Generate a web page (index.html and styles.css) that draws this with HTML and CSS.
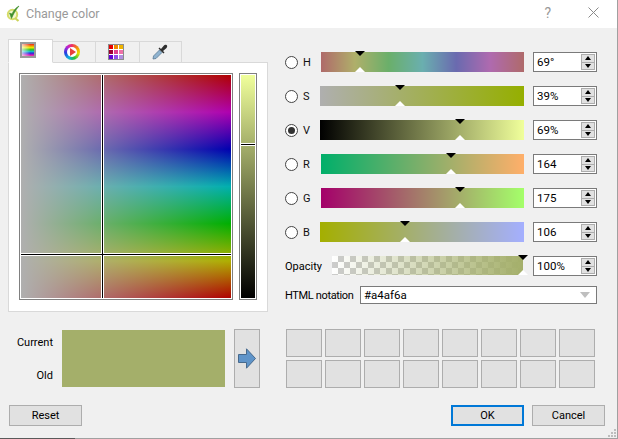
FILE: index.html
```html
<!DOCTYPE html>
<html lang="en">
<head>
<meta charset="utf-8">
<title>Change color</title>
<link rel="stylesheet" href="styles.css">
</head>
<body>
<div class="window">
  <header class="titlebar">
    <svg class="logo" width="14" height="17" viewBox="0 0 14 17">
      <circle cx="6.500" cy="9.500" r="4.700" fill="#f4f6cf" stroke="#d5dc6a" stroke-width="2"/>
      <path d="M9 13 L12.500 16" stroke="#cdd45a" stroke-width="2.200" fill="none"/>
      <path d="M3.500 8 L5.500 13.500 C7.500 9 9.500 5 13 1 C9.500 3 7.500 5.500 6 9 Z" fill="#3f8f2c" stroke="#3f8f2c" stroke-width=".6"/>
    </svg>
    <span class="title">Change color</span>
    <span class="help">?</span>
    <svg class="close" width="11" height="11" viewBox="0 0 11 11"><path d="M.5.5l10 10M10.500.5l-10 10" stroke="#8a8a8a" fill="none"/></svg>
  </header>

  <main class="content">
    <div class="top">
      <section class="picker">
        <div class="tabs">
          <div class="tab tab-active tab-a"><span class="icon-ramp"></span></div>
          <div class="tab tab-b"><span class="icon-wheel"><span class="icon-play"></span></span></div>
          <div class="tab tab-c">
            <span class="icon-grid">
              <i class="c1"></i><i class="c2"></i><i class="c3"></i>
              <i class="c4"></i><i class="c5"></i><i class="c6"></i>
              <i class="c7"></i><i class="c8"></i><i class="c9"></i>
            </span>
          </div>
          <div class="tab tab-d">
            <svg width="16" height="16" viewBox="0 0 16 16">
              <path d="M1 15 L1.500 12 L7.500 6 L10 8.500 L4 14.500 Z" fill="#8fb3d0" stroke="#5a7a94" stroke-width=".8"/>
              <path d="M6.500 4.500 L11.500 9.500 L12.500 8.500 L11 7 L14 4.500 C15.500 3 15.500 1.500 14.500 1 C13.500 .3 12.500 .8 11.500 2 L9 5 L7.500 3.500 Z" fill="#2f2f2f"/>
            </svg>
          </div>
        </div>
        <div class="pane">
          <div class="box">
            <div class="box-field">
              <span class="cross-v"></span>
              <span class="cross-h"></span>
              <span class="cross-dot"></span>
            </div>
          </div>
          <div class="ramp">
            <div class="ramp-field"><span class="ramp-mark"></span></div>
          </div>
        </div>
      </section>

      <section class="controls">
        <div class="row">
          <span class="radio"></span><span class="letter wide">H</span>
          <div class="slider sl-h"><i class="m-top" style="left:39px"></i><i class="m-bot" style="left:39px"></i></div>
          <div class="spin"><span class="spin-val">69°</span><span class="spin-btns"><b class="up"></b><b class="down"></b></span></div>
        </div>
        <div class="row">
          <span class="radio"></span><span class="letter">S</span>
          <div class="slider sl-s"><i class="m-top" style="left:80px"></i><i class="m-bot" style="left:80px"></i></div>
          <div class="spin"><span class="spin-val">39%</span><span class="spin-btns"><b class="up"></b><b class="down"></b></span></div>
        </div>
        <div class="row">
          <span class="radio radio-on"></span><span class="letter">V</span>
          <div class="slider sl-v"><i class="m-top" style="left:140px"></i><i class="m-bot" style="left:140px"></i></div>
          <div class="spin"><span class="spin-val">69%</span><span class="spin-btns"><b class="up"></b><b class="down"></b></span></div>
        </div>
        <div class="row">
          <span class="radio"></span><span class="letter wide">R</span>
          <div class="slider sl-r"><i class="m-top" style="left:130px"></i><i class="m-bot" style="left:130px"></i></div>
          <div class="spin"><span class="spin-val">164</span><span class="spin-btns"><b class="up"></b><b class="down"></b></span></div>
        </div>
        <div class="row">
          <span class="radio"></span><span class="letter wide">G</span>
          <div class="slider sl-g"><i class="m-top" style="left:139px"></i><i class="m-bot" style="left:139px"></i></div>
          <div class="spin"><span class="spin-val">175</span><span class="spin-btns"><b class="up"></b><b class="down"></b></span></div>
        </div>
        <div class="row">
          <span class="radio"></span><span class="letter">B</span>
          <div class="slider sl-b"><i class="m-top" style="left:85px"></i><i class="m-bot" style="left:85px"></i></div>
          <div class="spin"><span class="spin-val">106</span><span class="spin-btns"><b class="up"></b><b class="down"></b></span></div>
        </div>
        <div class="row">
          <span class="opacity-label">Opacity</span>
          <div class="slider sl-o"><i class="m-top" style="left:191px"></i><i class="m-bot" style="left:191px"></i></div>
          <div class="spin spin-o"><span class="spin-val">100%</span><span class="spin-btns"><b class="up"></b><b class="down"></b></span></div>
        </div>
        <div class="row-html">
          <span class="html-label">HTML notation</span>
          <div class="combo"><span>#a4af6a</span><i class="combo-arrow"></i></div>
        </div>
      </section>
    </div>

    <div class="mid">
      <div class="cur-labels"><span>Current</span><span>Old</span></div>
      <div class="preview"></div>
      <button class="arrow-btn" type="button" aria-label="Copy">
        <svg width="18" height="21" viewBox="0 0 18 21"><path d="M.5 6.500 H8.500 V.8 L17.500 10.500 L8.500 20.200 V14.500 H.5 Z" fill="#5f94c9" stroke="#47698c"/></svg>
      </button>
      <div class="swatches">
        <i></i><i></i><i></i><i></i><i></i><i></i><i></i><i></i>
        <i></i><i></i><i></i><i></i><i></i><i></i><i></i><i></i>
      </div>
    </div>

    <footer class="foot">
      <button class="btn btn-reset" type="button">Reset</button>
      <button class="btn btn-ok" type="button">OK</button>
      <button class="btn btn-cancel" type="button">Cancel</button>
    </footer>
  </main>

  <svg class="grip" width="8" height="8" viewBox="0 0 8 8">
    <path d="M6 0h2v2H6zM3 3h2v2H3zM6 3h2v2H6zM0 6h2v2H0zM3 6h2v2H3zM6 6h2v2H6z" fill="#bdbdbd"/>
  </svg>
  <span class="edge-dark"></span>
</div>
</body>
</html>
```

FILE: styles.css
```css
* { box-sizing: border-box; }
html, body { margin: 0; padding: 0; }
body {
  width: 618px;
  height: 439px;
  overflow: hidden;
  font-family: Roboto, "Noto Sans", sans-serif;
  font-size: 11px;
  color: #000;
}
.window {
  position: relative;
  width: 618px;
  height: 439px;
  background: #f0f0f0;
  border-right: 1px solid #a0a0a0;
  border-bottom: 1px solid #a0a0a0;
  display: flex;
  flex-direction: column;
}
.edge-dark {
  position: absolute;
  left: 0;
  bottom: -1px;
  width: 75px;
  height: 1px;
  background: #5a5a5a;
}
.titlebar {
  height: 28px;
  flex: none;
  background: #fff;
  display: flex;
  align-items: center;
  padding-left: 6px;
  color: #999;
}
.logo { flex: none; margin-top: -2px; }
.title { margin-left: 6px; font-size: 12.500px; margin-top: -2px; }
.help { margin-left: auto; font-size: 14px; margin-top: -3px; }
.close { margin: -3px 18px 0 37px; }

.content {
  flex: 1;
  padding: 11px 12px 0 8px;
  display: flex;
  flex-direction: column;
}
.top { display: flex; height: 273px; }

/* picker */
.picker { width: 260px; flex: none; display: flex; flex-direction: column; }
.tabs { display: flex; align-items: flex-end; height: 24px; margin-bottom: -1px; position: relative; z-index: 1; }
.tab {
  height: 22px;
  border: 1px solid #d9d9d9;
  border-left: 0;
  background: #f0f0f0;
  display: flex;
  align-items: center;
  justify-content: center;
  padding-bottom: 1px;
}
.tab-a { width: 45px; height: 24px; border-left: 1px solid #d9d9d9; background: #fff; border-bottom-color: #fff; padding: 0 5px 3px 0; }
.tab-b { width: 43px; padding-right: 5px; }
.tab-c { width: 44px; padding-right: 4px; }
.tab-d { width: 42px; padding-right: 2px; }
.icon-ramp {
  width: 16px;
  height: 16px;
  border: 2px solid #9a9a9a;
  background:
    linear-gradient(to right, rgba(255,255,255,.7), rgba(255,255,255,0) 70%),
    linear-gradient(to bottom, #f02020, #f0a000 18%, #e8e800 30%, #20c020 48%, #10c0c0 62%, #2030e0 76%, #c010c0 90%, #f040a0);
}
.icon-wheel {
  position: relative;
  width: 16px;
  height: 16px;
  border-radius: 50%;
  background: conic-gradient(#f03060, #f0a000 60deg, #e8e000 100deg, #20c040 160deg, #10b0e0 210deg, #2040e0 260deg, #c020d0 320deg, #f03060);
}
.icon-wheel::before {
  content: "";
  position: absolute;
  inset: 3px;
  border-radius: 50%;
  background: #fff;
}
.icon-play {
  position: absolute;
  left: 6px;
  top: 4px;
  border-left: 6px solid #e8403c;
  border-top: 4px solid transparent;
  border-bottom: 4px solid transparent;
}
.icon-grid {
  width: 16px;
  height: 16px;
  border: 1px solid #8c8c8c;
  background: #fff;
  display: grid;
  grid-template-columns: repeat(3, 4px);
  grid-auto-rows: 4px;
  gap: 1px;
}
.c1 { background: #e80000; } .c2 { background: #f08a00; } .c3 { background: #f0b400; }
.c4 { background: #a00030; } .c5 { background: #e0408c; } .c6 { background: #f070a8; }
.c7 { background: #6000d8; } .c8 { background: #9050e8; } .c9 { background: #b090e0; }
.pane {
  height: 250px;
  background: #fff;
  border: 1px solid #d9d9d9;
  padding: 10px 10px 0 10px;
  display: flex;
  gap: 6px;
  align-items: flex-start;
}
.box, .ramp {
  height: 227px;
  border: 1px solid #808080;
  padding: 1px;
  background: #fff;
}
.box { width: 214px; }
.ramp { width: 18px; }
.box-field, .ramp-field { position: relative; width: 100%; height: 100%; }
.box-field {
  background:
    linear-gradient(to right, #afafaf, rgba(175,175,175,0)),
    linear-gradient(to bottom, #af0000, #af00af 16.670%, #0000af 33.330%, #00afaf 50%, #00af00 66.670%, #afaf00 83.330%, #af0000);
}
.cross-v {
  position: absolute;
  left: 80px;
  top: 0;
  bottom: 0;
  width: 3px;
  background: linear-gradient(to right, #fff 33%, #000 33% 66%, #fff 66%);
}
.cross-h {
  position: absolute;
  left: 0;
  right: 0;
  top: 178px;
  height: 3px;
  background: linear-gradient(to bottom, #fff 33%, #000 33% 66%, #fff 66%);
}
.cross-dot {
  position: absolute;
  left: 80px;
  top: 178px;
  width: 3px;
  height: 3px;
  background:
    linear-gradient(#000, #000) center / 1px 100% no-repeat,
    linear-gradient(#000, #000) center / 100% 1px no-repeat,
    #fff;
}
.ramp-field { background: linear-gradient(to bottom, #f0ff9b, #000); }
.ramp-mark {
  position: absolute;
  left: 0;
  right: 0;
  top: 68px;
  height: 3px;
  background: linear-gradient(to bottom, #fff 33%, #000 33% 66%, #fff 66%);
}

/* controls */
.controls { width: 312px; margin-left: 17px; padding-top: 13px; flex: none; }
.row { display: flex; align-items: center; height: 20px; margin-bottom: 14px; }
.radio {
  position: relative;
  width: 13px;
  height: 13px;
  flex: none;
  border-radius: 50%;
  border: 1px solid #444;
  background: #fff;
}
.radio-on::after {
  content: "";
  position: absolute;
  inset: 2px;
  border-radius: 50%;
  background: #333;
}
.letter { width: 17px; margin-left: 5px; flex: none; color: #111; }
.wide { width: 18px; }
.opacity-label { width: 47px; flex: none; }
.slider { position: relative; flex: 1; height: 20px; }
.m-top, .m-bot {
  position: absolute;
  width: 0;
  height: 0;
  margin-left: -5px;
  border-left: 5px solid transparent;
  border-right: 5px solid transparent;
}
.m-top { top: -1px; border-top: 5px solid #000; }
.m-bot { bottom: 0; border-bottom: 5px solid #fff; }
.sl-h { background: linear-gradient(to right, #af6a6a, #afaf6a 16.670%, #6aaf6a 33.330%, #6aafaf 50%, #6a6aaf 66.670%, #af6aaf 83.330%, #af6a6a); }
.sl-s { background: linear-gradient(to right, #afafaf, #95af00); }
.sl-v { background: linear-gradient(to right, #000, #f0ff9b); }
.sl-r { background: linear-gradient(to right, #00af6a, #ffaf6a); }
.sl-g { background: linear-gradient(to right, #a4006a, #a4ff6a); }
.sl-b { background: linear-gradient(to right, #a4af00, #a4afff); }
.sl-o {
  height: 19px;
  align-self: flex-start;
  background:
    linear-gradient(to right, rgba(164,175,106,0), #a4af6a),
    conic-gradient(#ccc 25%, #fff 25% 50%, #ccc 50% 75%, #fff 75%) 0 0 / 12px 12px;
}
.spin {
  width: 64px;
  height: 20px;
  flex: none;
  margin-left: 9px;
  border: 1px solid #7a7a7a;
  background: #fff;
  display: flex;
  align-items: center;
  padding: 0 1px 0 3px;
  font-size: 11.500px;
}
.spin-o { margin-left: 10px; }
.spin-val { flex: 1; }
.spin-btns { width: 14px; height: 16px; display: flex; flex-direction: column; flex: none; }
.up, .down {
  flex: 1;
  background: #e1e1e1;
  border: 1px solid #adadad;
  display: flex;
  align-items: center;
  justify-content: center;
}
.down { border-top: 0; }
.up::before, .down::before {
  content: "";
  width: 0;
  height: 0;
  border-left: 3.500px solid transparent;
  border-right: 3.500px solid transparent;
}
.up::before { border-bottom: 4px solid #000; }
.down::before { border-top: 4px solid #000; }
.row-html { display: flex; align-items: center; height: 18px; margin-top: -4px; }
.html-label { width: 75px; flex: none; white-space: nowrap; letter-spacing: -.35px; }
.combo {
  flex: 1;
  height: 18px;
  border: 1px solid #7a7a7a;
  background: #fff;
  display: flex;
  align-items: center;
  justify-content: space-between;
  padding: 0 6px 0 3px;
  font-size: 11.500px;
}
.combo-arrow {
  width: 0;
  height: 0;
  border-left: 5px solid transparent;
  border-right: 5px solid transparent;
  border-top: 6px solid #bfbfbf;
}

/* lower */
.mid { display: flex; margin-top: 17px; height: 59px; align-items: center; }
.cur-labels {
  width: 45px;
  height: 47px;
  margin-top: 2px;
  flex: none;
  display: flex;
  flex-direction: column;
  justify-content: space-between;
  align-items: flex-end;
  line-height: 14px;
}
.preview { width: 163px; height: 57px; flex: none; margin-left: 9px; background: #a4af6a; }
.arrow-btn {
  width: 26px;
  height: 59px;
  flex: none;
  margin: 0 26px 0 9px;
  padding: 0;
  background: #e1e1e1;
  border: 1px solid #adadad;
  display: flex;
  align-items: center;
  justify-content: center;
}
.swatches {
  display: grid;
  grid-template-columns: repeat(8, 36px);
  grid-auto-rows: 28px;
  gap: 3px;
}
.swatches i { background: #e1e1e1; border: 1px solid #adadad; }
.foot { display: flex; margin-top: 17px; padding-left: 1px; }
.btn {
  width: 73px;
  height: 21px;
  padding: 0;
  background: #e1e1e1;
  border: 1px solid #adadad;
  font: inherit;
  color: #000;
}
.btn-ok { margin-left: auto; border: 2px solid #0078d7; }
.btn-cancel { margin-left: 8px; }
.grip { position: absolute; right: 1px; bottom: 1px; }
```
